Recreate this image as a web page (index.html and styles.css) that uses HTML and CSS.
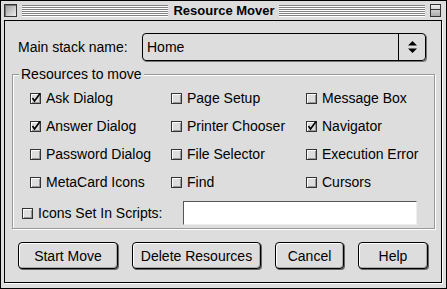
FILE: index.html
```html
<!DOCTYPE html>
<html lang="en">
<head>
  <meta charset="UTF-8">
  <meta name="viewport" content="width=device-width, initial-scale=1.0">
  <title>Resource Mover</title>
  <link rel="stylesheet" href="styles.css">
</head>
<body>
  <div class="window">
    <header class="titlebar">
      <span class="close-box"></span>
      <span class="stripes"></span>
      <span class="title">Resource Mover</span>
      <span class="stripes"></span>
      <span class="shade-box"></span>
    </header>

    <div class="panel">
      <div class="stack-row">
        <span class="stack-label">Main stack name:</span>
        <div class="popup">
          <span class="popup-value">Home</span>
          <span class="popup-arrows">
            <svg width="11" height="12" viewBox="0 0 11 12">
              <path d="M5.5 0 L10 4.5 L1 4.5 Z M1 7.5 L10 7.5 L5.5 12 Z" fill="#000"/>
            </svg>
          </span>
        </div>
      </div>

      <fieldset class="group">
        <legend>Resources to move</legend>
        <div class="options">
          <label class="option"><span class="box"><svg class="check" width="9" height="9" viewBox="0 0 9 9"><path d="M1.5 4 L3.5 7 L9 -0.5" fill="none" stroke="#000" stroke-width="1.6"/></svg></span>Ask Dialog</label>
          <label class="option"><span class="box"></span>Page Setup</label>
          <label class="option"><span class="box"></span>Message Box</label>
          <label class="option"><span class="box"><svg class="check" width="9" height="9" viewBox="0 0 9 9"><path d="M1.5 4 L3.5 7 L9 -0.5" fill="none" stroke="#000" stroke-width="1.6"/></svg></span>Answer Dialog</label>
          <label class="option"><span class="box"></span>Printer Chooser</label>
          <label class="option"><span class="box"><svg class="check" width="9" height="9" viewBox="0 0 9 9"><path d="M1.5 4 L3.5 7 L9 -0.5" fill="none" stroke="#000" stroke-width="1.6"/></svg></span>Navigator</label>
          <label class="option"><span class="box"></span>Password Dialog</label>
          <label class="option"><span class="box"></span>File Selector</label>
          <label class="option"><span class="box"></span>Execution Error</label>
          <label class="option"><span class="box"></span>MetaCard Icons</label>
          <label class="option"><span class="box"></span>Find</label>
          <label class="option"><span class="box"></span>Cursors</label>
        </div>
        <div class="scripts-row">
          <label class="option scripts-label"><span class="box"></span>Icons Set In Scripts:</label>
          <span class="field"></span>
        </div>
      </fieldset>

      <div class="buttons">
        <button class="btn btn-start">Start Move</button>
        <button class="btn btn-delete">Delete Resources</button>
        <button class="btn btn-cancel">Cancel</button>
        <button class="btn btn-help">Help</button>
      </div>
    </div>
  </div>
</body>
</html>
```

FILE: styles.css
```css
* {
  box-sizing: border-box;
}

body {
  margin: 0;
  font-family: "Liberation Sans", Arial, sans-serif;
  font-size: 14px;
  color: #000;
  background: #fff;
}

.window {
  display: flex;
  flex-direction: column;
  width: 447px;
  height: 289px;
  border: 1px solid #000;
  background: #ddd;
}

/* title bar */
.titlebar {
  display: flex;
  align-items: center;
  height: 19px;
  padding: 0 5px 0 3px;
  flex-shrink: 0;
}

.close-box {
  width: 13px;
  height: 13px;
  border: 1px solid #333;
  background: linear-gradient(135deg, #999, #eee);
  box-shadow: inset 1px 1px 0 #777;
  margin-right: 5px;
}

.stripes {
  flex: 1;
  height: 12px;
  background: repeating-linear-gradient(#808080 0 1px, #fff 1px 2px);
}

.title {
  font-weight: bold;
  font-size: 13px;
  padding: 0 4px 0 5px;
}

.shade-box {
  position: relative;
  width: 11px;
  height: 13px;
  margin-left: 5px;
  border: 1px solid #333;
  background: linear-gradient(#eee, #aaa);
}

.shade-box::after {
  content: "";
  position: absolute;
  left: 0;
  right: 0;
  top: 4px;
  border-top: 1px solid #333;
}

/* main panel */
.panel {
  flex: 1;
  margin: 0 4px 5px 3px;
  padding: 12px 6px 0 7px;
  border: 1px solid #000;
  box-shadow: 1px 1px 0 #fff;
}

.stack-row {
  display: flex;
  align-items: center;
  padding-left: 6px;
}

.stack-label {
  width: 124px;
}

.popup {
  display: flex;
  width: 284px;
  height: 28px;
  border: 1px solid #000;
  border-radius: 4px;
  box-shadow: 1px 1px 0 #777;
}

.popup-value {
  flex: 1;
  display: flex;
  align-items: center;
  padding-left: 4px;
}

.popup-arrows {
  width: 27px;
  display: flex;
  align-items: center;
  justify-content: center;
  border-left: 1px solid #000;
}

.popup-arrows svg {
  display: block;
}

/* group box */
.group {
  margin: 5px 0 0;
  padding: 0 0 3px;
  min-width: 0;
  border: 1px solid #999;
  box-shadow: inset 1px 1px 0 #fff, 1px 1px 0 #fff;
}

.group legend {
  margin-left: 6px;
  padding: 0 2px;
  line-height: 16px;
  background: #ddd;
}

.options {
  display: grid;
  grid-template-columns: 141px 135px auto;
  grid-auto-rows: 28px;
  padding: 2px 0 0 17px;
}

.option {
  display: flex;
  align-items: center;
  gap: 5px;
  white-space: nowrap;
}

.box {
  width: 11px;
  height: 11px;
  flex-shrink: 0;
  border: 1px solid #333;
  background: #ddd;
  box-shadow: inset 1px 1px 0 #fff, inset -1px -1px 0 #999;
}

.check {
  display: block;
  overflow: visible;
}

.scripts-row {
  display: flex;
  align-items: center;
  margin-top: 5px;
  padding-left: 9px;
}

.scripts-label {
  width: 161px;
}

.field {
  width: 234px;
  height: 24px;
  background: #fff;
  border: 1px solid;
  border-color: #555 #eee #eee #555;
}

/* buttons */
.buttons {
  display: flex;
  gap: 14px;
  margin-top: 13px;
  padding-left: 6px;
}

.btn {
  height: 27px;
  padding: 0;
  font-family: inherit;
  font-size: 14px;
  color: #000;
  background: #ddd;
  border: 1px solid #000;
  border-radius: 4px;
  box-shadow: inset 1px 1px 0 #fff, inset -1px -1px 0 #aaa, 1px 1px 0 #666;
}

.btn-start { width: 100px; }
.btn-delete { width: 129px; }
.btn-cancel { width: 69px; }
.btn-help { width: 70px; }
```
